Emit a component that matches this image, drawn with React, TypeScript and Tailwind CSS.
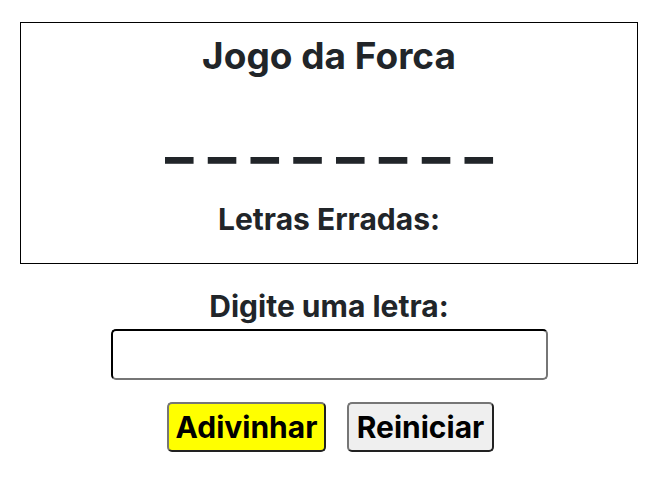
import React from "react";

export default function App() {
  return (
    <div className="min-h-[486px] w-[658px] bg-white text-[#212529]" style={{ fontFamily: "Inter, 'Noto Sans', sans-serif" }}>
      <div className="ml-[20px] mt-[22px] flex h-[242px] w-[618px] flex-col items-center border border-black">
        <h1 className="mt-[14px] text-[37px] font-bold leading-none">Jogo da Forca</h1>
        <p className="mt-[31px] text-[60px] font-bold leading-none whitespace-pre">_ _ _ _ _ _ _ _</p>
        <h2 className="mt-[39px] text-[30px] font-bold leading-none">Letras Erradas:</h2>
      </div>
      <div className="flex flex-col items-center">
        <label className="mt-[27px] text-[30px] font-bold leading-none">Digite uma letra:</label>
        <input
          type="text"
          className="mt-[8px] h-[51px] w-[437px] rounded-[5px] border-2 border-t-black border-l-black border-b-[#767676] border-r-[#767676] bg-white outline-none"
        />
        <div className="mt-[22px] ml-[3px] flex gap-[21px]">
          <button className="h-[50px] w-[159px] rounded-[5px] border-2 border-t-[#767676] border-l-[#767676] border-b-[#222] border-r-[#222] bg-[#ffff00] text-[30px] font-bold leading-none text-black">
            Adivinhar
          </button>
          <button className="h-[50px] w-[147px] rounded-[5px] border-2 border-t-[#767676] border-l-[#767676] border-b-[#222] border-r-[#222] bg-[#efefef] text-[30px] font-bold leading-none text-black">
            Reiniciar
          </button>
        </div>
      </div>
    </div>
  );
}
